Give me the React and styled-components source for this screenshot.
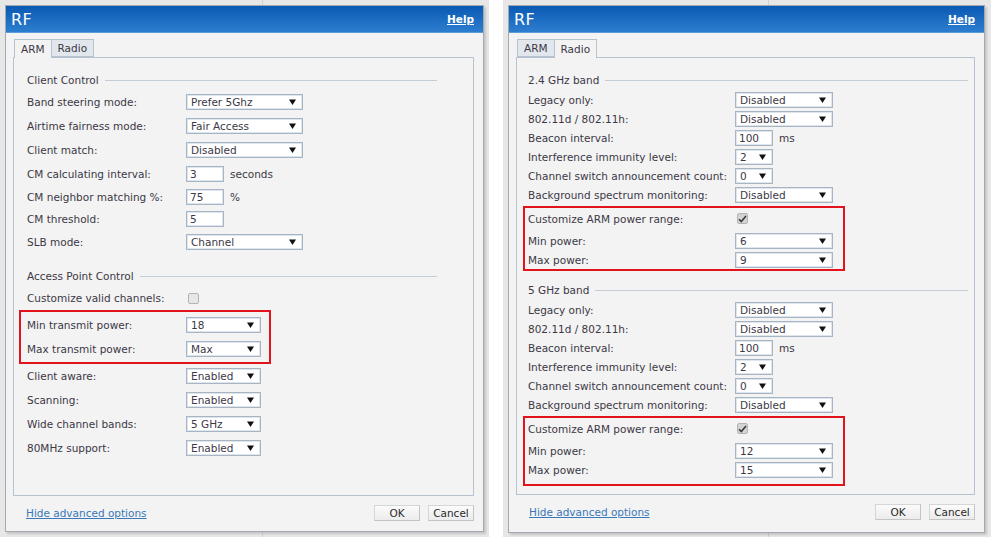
import React from 'react';
import styled, { createGlobalStyle } from 'styled-components';

// two RF dialogs side by side: ARM tab on the left, Radio tab on the right

const GlobalStyle = createGlobalStyle`
  html, body {
    margin: 0;
    padding: 0;
    background: #ffffff;
  }
  body {
    font-family: "DejaVu Sans", Verdana, sans-serif;
    font-size: 10.5px;
    color: #3c3846;
  }
`;

const Page = styled.div`
  display: flex;
  gap: 14px;
  width: 998px;
  height: 542px;
  overflow: hidden;
`;

const Shot = styled.div`
  width: ${p => p.$width}px;
  height: 537px;
  padding: 5px 0 0 5px;
  box-sizing: border-box;
  background-color: #e7e7e7;
  background-image: linear-gradient(to right, transparent ${p => p.$lineAt}px, #d2d2d2 ${p => p.$lineAt}px, #d2d2d2 ${p => p.$lineAt + 1}px, transparent ${p => p.$lineAt + 1}px);
`;

const Dialog = styled.div`
  width: ${p => p.$width}px;
  height: ${p => p.$height}px;
  box-sizing: border-box;
  border: 1px solid #a3a9b0;
  background: #f3f3f3;
  box-shadow: 2px 2px 2px rgba(0, 0, 0, 0.15);
  display: flex;
  flex-direction: column;
`;

const TitleBar = styled.div`
  height: 26px;
  flex-shrink: 0;
  display: flex;
  align-items: center;
  justify-content: space-between;
  padding: 0 9px 0 5px;
  background: linear-gradient(#0a59b3, #2d7ecf);
  border-bottom: 1px solid #5d9ad8;
`;

const Title = styled.span`
  color: #ffffff;
  font-size: 16px;
  letter-spacing: 0.5px;
`;

const HelpLink = styled.a`
  color: #ffffff;
  font-size: 10.5px;
  font-weight: bold;
  text-decoration: underline;
  cursor: pointer;
`;

const Body = styled.div`
  flex: 1;
  display: flex;
  flex-direction: column;
  padding: 6px 9px 0 7px;
`;

const Tabs = styled.div`
  display: flex;
  padding-left: 1px;
  height: 19px;
  position: relative;
  z-index: 1;
  margin-bottom: -1px;
`;

const Tab = styled.div`
  box-sizing: border-box;
  height: ${p => (p.$active ? 19 : 18)}px;
  align-self: flex-start;
  padding: 0 6px;
  display: flex;
  align-items: center;
  border: 1px solid #b6c2cf;
  border-bottom: ${p => (p.$active ? 'none' : '1px solid #b6c2cf')};
  margin-left: -1px;
  background: ${p => (p.$active ? '#f3f3f3' : '#e2e7ed')};
  color: #3c3846;
  &:first-child {
    margin-left: 0;
  }
`;

const Panel = styled.div`
  height: ${p => p.$height}px;
  box-sizing: border-box;
  border: 1px solid #b6c2cf;
  padding: 15px ${p => p.$padRight}px 0 ${p => p.$padLeft}px;
`;

const Legend = styled.div`
  display: flex;
  align-items: center;
  height: 14px;
  margin: ${p => p.$top || 0}px ${p => p.$lineEnd}px 3px 0;
  gap: 6px;
  &::after {
    content: '';
    flex: 1;
    height: 1px;
    background: #c4ccd6;
  }
`;

const Row = styled.div`
  display: grid;
  grid-template-columns: ${p => p.$labelWidth}px auto;
  align-items: center;
  height: ${p => p.$h}px;
  margin-bottom: ${p => p.$mb || 0}px;
`;

const Label = styled.span`
  white-space: nowrap;
`;

const Control = styled.div`
  display: flex;
  align-items: center;
  gap: 6px;
`;

const SelectBox = styled.div`
  width: ${p => p.$width}px;
  height: 16px;
  box-sizing: border-box;
  background: #ffffff;
  border: 1px solid #a6b4c3;
  box-shadow: inset 0 0 0 1px #dfe5ec;
  display: flex;
  align-items: center;
  justify-content: space-between;
  padding: 0 6px 0 4px;
  color: #3c3846;
`;

const TextInput = styled.div`
  width: 38px;
  height: 16px;
  box-sizing: border-box;
  background: #ffffff;
  border: 1px solid #a6b4c3;
  box-shadow: inset 0 0 0 1px #dfe5ec;
  padding: 0 3px;
  display: flex;
  align-items: center;
`;

const CheckBox = styled.div`
  width: 11px;
  height: 11px;
  margin-left: 2px;
  box-sizing: border-box;
  border: 1px solid #b4b4b4;
  border-radius: 2px;
  background: ${p => (p.$checked ? '#d4d4d4' : '#e6e6e6')};
  display: flex;
  align-items: center;
  justify-content: center;
`;

const Highlight = styled.div`
  width: fit-content;
  border: 2px solid #e3131b;
  margin: ${p => p.$top}px 0 0 -${p => p.$inset + 2}px;
  padding: 1px ${p => p.$padRight}px ${p => p.$padBottom}px ${p => p.$inset}px;
`;

const Footer = styled.div`
  display: flex;
  align-items: center;
  justify-content: space-between;
  height: 16px;
  margin-top: ${p => p.$top}px;
  padding: 0 0 0 13px;
`;

const LinkText = styled.a`
  color: #3a78b8;
  text-decoration: underline;
  cursor: pointer;
`;

const Buttons = styled.div`
  display: flex;
  gap: 8px;
`;

const Button = styled.button`
  width: 46px;
  height: 16px;
  padding: 0;
  font-family: inherit;
  font-size: 10.5px;
  color: #2b2b2b;
  background: linear-gradient(#fbfbfb, #ececec);
  border: 1px solid #d6d6d6;
  border-right-color: #c4c4c4;
  border-bottom-color: #c4c4c4;
`;

const Arrow = () => (
  <svg width="7" height="6" viewBox="0 0 7 6">
    <path d="M0 0.5h7L3.5 6z" fill="#111" />
  </svg>
);

const Tick = () => (
  <svg width="9" height="8" viewBox="0 0 9 8">
    <path d="M1 4.2l2.3 2.4L8 1" fill="none" stroke="#3a3a3a" strokeWidth="1.6" />
  </svg>
);

const Select = ({ width, value }) => (
  <SelectBox $width={width}>
    <span>{value}</span>
    <Arrow />
  </SelectBox>
);

// one row builder so both panels can share the same field kinds
const Field = ({ label, labelWidth, h, mb, field }) => {
  let control = null;
  if (field.type === 'select') control = <Select width={field.width} value={field.value} />;
  if (field.type === 'input')
    control = (
      <>
        <TextInput>{field.value}</TextInput>
        {field.unit && <span>{field.unit}</span>}
      </>
    );
  if (field.type === 'check') control = <CheckBox $checked={field.checked}>{field.checked && <Tick />}</CheckBox>;
  return (
    <Row $labelWidth={labelWidth} $h={h} $mb={mb}>
      <Label>{label}</Label>
      <Control>{control}</Control>
    </Row>
  );
};

const DialogFrame = ({ width, height, activeTab, panelHeight, padLeft, padRight, footerTop, children }) => (
  <Dialog $width={width} $height={height}>
    <TitleBar>
      <Title>RF</Title>
      <HelpLink>Help</HelpLink>
    </TitleBar>
    <Body>
      <Tabs>
        <Tab $active={activeTab === 'ARM'}>ARM</Tab>
        <Tab $active={activeTab === 'Radio'}>Radio</Tab>
      </Tabs>
      <Panel $height={panelHeight} $padLeft={padLeft} $padRight={padRight}>
        {children}
      </Panel>
      <Footer $top={footerTop}>
        <LinkText>Hide advanced options</LinkText>
        <Buttons>
          <Button>OK</Button>
          <Button>Cancel</Button>
        </Buttons>
      </Footer>
    </Body>
  </Dialog>
);

const ARM_LABEL = 159;
const longSel = v => ({ type: 'select', width: 117, value: v });
const shortSel = v => ({ type: 'select', width: 75, value: v });

const ArmTab = () => (
  <DialogFrame width={479} height={527} activeTab="ARM" panelHeight={439} padLeft={13} padRight={0} footerTop={9}>
    <Legend $lineEnd={36}>Client Control</Legend>
    <Field labelWidth={ARM_LABEL} h={24} label="Band steering mode:" field={longSel('Prefer 5Ghz')} />
    <Field labelWidth={ARM_LABEL} h={24} label="Airtime fairness mode:" field={longSel('Fair Access')} />
    <Field labelWidth={ARM_LABEL} h={24} label="Client match:" field={longSel('Disabled')} />
    <Field labelWidth={ARM_LABEL} h={24} label="CM calculating interval:" field={{ type: 'input', value: '3', unit: 'seconds' }} />
    <Field labelWidth={ARM_LABEL} h={22} label="CM neighbor matching %:" field={{ type: 'input', value: '75', unit: '%' }} />
    <Field labelWidth={ARM_LABEL} h={22} label="CM threshold:" field={{ type: 'input', value: '5' }} />
    <Field labelWidth={ARM_LABEL} h={24} label="SLB mode:" field={longSel('Channel')} />

    <Legend $top={15} $lineEnd={36}>Access Point Control</Legend>
    <Field labelWidth={ARM_LABEL} h={24} label="Customize valid channels:" field={{ type: 'check', checked: false }} />
    <Highlight $top={0} $inset={6} $padRight={8} $padBottom={1}>
      <Field labelWidth={ARM_LABEL} h={24} label="Min transmit power:" field={shortSel('18')} />
      <Field labelWidth={ARM_LABEL} h={24} label="Max transmit power:" field={shortSel('Max')} />
    </Highlight>
    <Field labelWidth={ARM_LABEL} h={24} label="Client aware:" field={shortSel('Enabled')} />
    <Field labelWidth={ARM_LABEL} h={24} label="Scanning:" field={shortSel('Enabled')} />
    <Field labelWidth={ARM_LABEL} h={24} label="Wide channel bands:" field={shortSel('5 GHz')} />
    <Field labelWidth={ARM_LABEL} h={24} label="80MHz support:" field={shortSel('Enabled')} />
  </DialogFrame>
);

const RADIO_LABEL = 207;
const bandSel = v => ({ type: 'select', width: 98, value: v });
const tinySel = v => ({ type: 'select', width: 38, value: v });

const Band = ({ title, top, minPower, maxPower, boxBottom }) => (
  <>
    <Legend $top={top} $lineEnd={6}>{title}</Legend>
    <Field labelWidth={RADIO_LABEL} h={19} label="Legacy only:" field={bandSel('Disabled')} />
    <Field labelWidth={RADIO_LABEL} h={19} label="802.11d / 802.11h:" field={bandSel('Disabled')} />
    <Field labelWidth={RADIO_LABEL} h={19} label="Beacon interval:" field={{ type: 'input', value: '100', unit: 'ms' }} />
    <Field labelWidth={RADIO_LABEL} h={19} label="Interference immunity level:" field={tinySel('2')} />
    <Field labelWidth={RADIO_LABEL} h={19} label="Channel switch announcement count:" field={tinySel('0')} />
    <Field labelWidth={RADIO_LABEL} h={19} label="Background spectrum monitoring:" field={bandSel('Disabled')} />
    <Highlight $top={2} $inset={3} $padRight={10} $padBottom={boxBottom}>
      <Field labelWidth={RADIO_LABEL} h={19} mb={3} label="Customize ARM power range:" field={{ type: 'check', checked: true }} />
      <Field labelWidth={RADIO_LABEL} h={19} label="Min power:" field={bandSel(minPower)} />
      <Field labelWidth={RADIO_LABEL} h={19} label="Max power:" field={bandSel(maxPower)} />
    </Highlight>
  </>
);

const RadioTab = () => (
  <DialogFrame width={477} height={528} activeTab="Radio" panelHeight={438} padLeft={11} padRight={0} footerTop={9}>
    <Band title="2.4 GHz band" top={0} minPower="6" maxPower="9" boxBottom={0} />
    <Band title="5 GHz band" top={12} minPower="12" maxPower="15" boxBottom={5} />
  </DialogFrame>
);

const App = () => (
  <>
    <GlobalStyle />
    <Page>
      <Shot $width={489} $lineAt={262}>
        <ArmTab />
      </Shot>
      <Shot $width={488} $lineAt={265}>
        <RadioTab />
      </Shot>
    </Page>
  </>
);

export default App;
